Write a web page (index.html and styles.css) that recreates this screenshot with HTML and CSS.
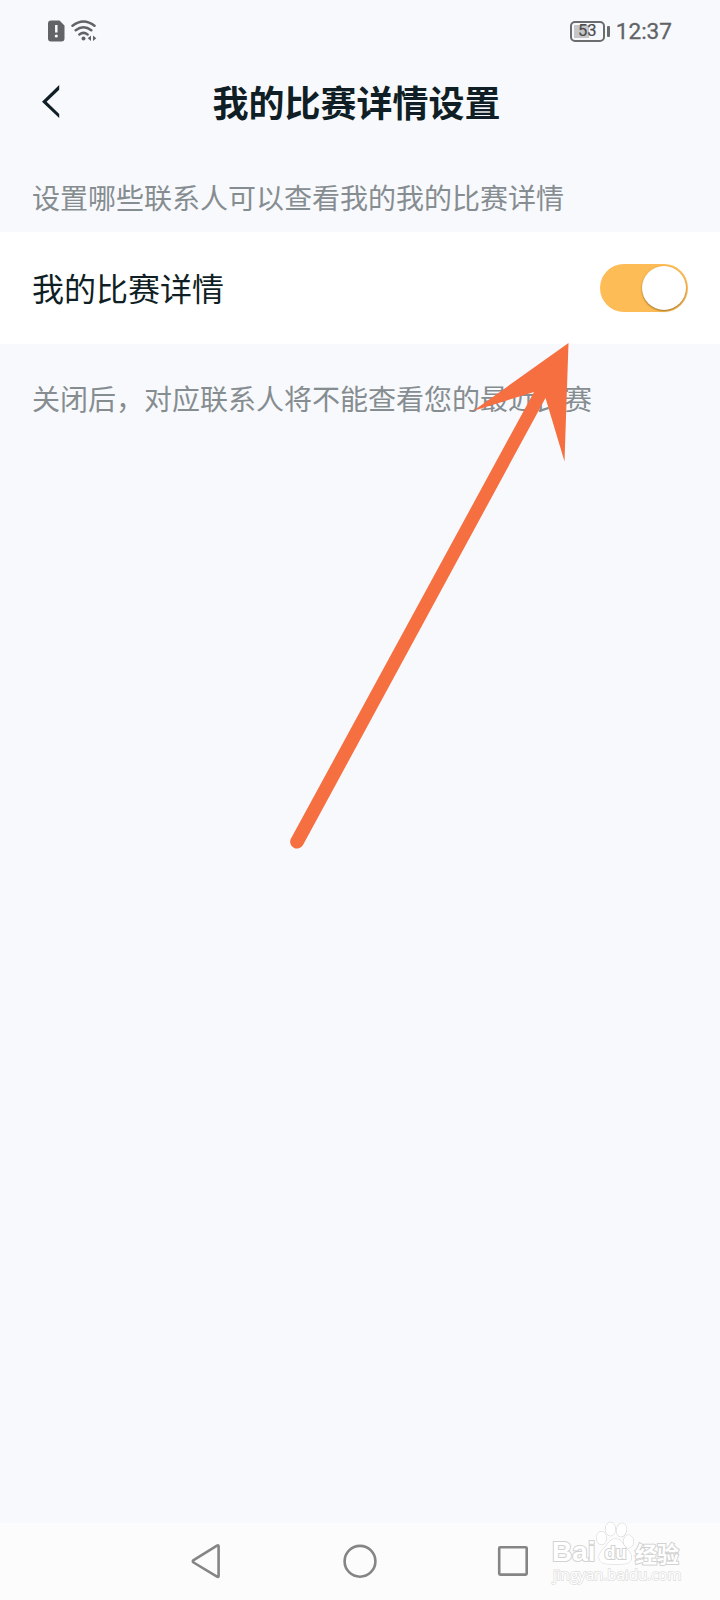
FILE: index.html
```html
<!DOCTYPE html>
<html lang="zh-CN">
<head>
<meta charset="utf-8">
<title>我的比赛详情设置</title>
<link rel="stylesheet" href="styles.css">
</head>
<body>
<div class="screen">
  <div class="status">
    <div class="status-left">
      <svg class="sim" width="17" height="22" viewBox="0 0 17 22"><path d="M3 .5h8.5L16.500 5.500V18.500a3 3 0 0 1-3 3H3a3 3 0 0 1-3-3v-15a3 3 0 0 1 3-3z" fill="#626366"/><path d="M8.300 5v7.500" stroke="#f8f9fd" stroke-width="2.500"/><circle cx="8.300" cy="16" r="1.600" fill="#f8f9fd"/></svg>
      <svg class="wifi" width="26" height="22" viewBox="0 0 26 22" fill="none" stroke="#626366" stroke-width="2.500" stroke-linecap="round"><path d="M1.500 5.800Q12.500-2.900 23.500 5.800M4.700 10.300Q12.500 4.200 20.300 10.300M8.400 14.400Q12.500 11.400 16.600 14.400"/><circle cx="12.500" cy="18.500" r="2" fill="#626366" stroke="none"/><path d="M20 15.500v5.500l-3.300-2.700zM22 15.500v5.500l3.300-2.700z" fill="#626366" stroke="none"/></svg>
    </div>
    <div class="status-right">
      <div class="battery"><span>53</span></div>
      <i class="battery-tip"></i>
      <span class="clock">12:37</span>
    </div>
  </div>
  <header class="header">
    <svg class="back" width="20" height="34" viewBox="0 0 20 34"><path d="M17.200 1V5.700L4.600 17.800 17.200 29.900V34L0 17.800z" fill="#0f1f25"/></svg>
    <h1 class="title">我的比赛详情设置</h1>
  </header>
  <p class="hint">设置哪些联系人可以查看我的我的比赛详情</p>
  <div class="item">
    <span class="item-label">我的比赛详情</span>
    <div class="toggle"><div class="knob"></div></div>
  </div>
  <p class="note">关闭后，对应联系人将不能查看您的最近比赛</p>
  <nav class="nav">
    <svg width="360" height="36" viewBox="0 0 360 36" fill="none" stroke="#858585" stroke-width="2.600" stroke-linejoin="round"><path d="M38.600 3.300V32.700Q38.600 34.500 37 33.600L13.600 19.500Q12 18.300 13.600 17.100L37 2.600Q38.600 1.700 38.600 3.300z"/><circle cx="180" cy="18.300" r="15.400"/><rect x="319.200" y="4.300" width="27.500" height="27.300" rx="1"/></svg>
  </nav>
  <svg class="arrow" width="320" height="530" viewBox="270 330 320 530"><path d="M568.500 343L473 411 534 392 291 838.500A6.700 6.700 0 0 0 303 845L545.500 398 564.500 461.500z" fill="#f66f41"/></svg>
  <div class="watermark">
    <div class="brand">
      <span class="bai">Bai</span>
      <svg class="paw" width="40" height="44" viewBox="0 0 40 44" fill="#fff" stroke="#d2d2d2"><ellipse cx="5.500" cy="17" rx="5" ry="6.500"/><ellipse cx="14.500" cy="8" rx="5" ry="6.800"/><ellipse cx="25.500" cy="9" rx="5" ry="6.800" transform="rotate(10 25.500 9)"/><ellipse cx="32.500" cy="20.500" rx="5" ry="6.500"/><path d="M19.500 18C13 18 12 24 7 28.500 0 35 3 42.500 11 42.800c5 .3 13 .3 17 0C36 42.500 38 35.500 32 29.500 27 24.500 26.500 18 19.500 18z"/><text x="19.500" y="38" text-anchor="middle" class="du">du</text></svg>
      <span class="jy">经验</span>
    </div>
    <div class="url">jingyan.baidu.com</div>
  </div>
</div>
</body>
</html>
```
FILE: styles.css
```css
* { box-sizing: border-box; margin: 0; padding: 0; }
body { font-family: "Noto Sans CJK SC", sans-serif; }
.screen { position: relative; width: 720px; height: 1600px; display: flex; flex-direction: column; background: #f8f9fd; overflow: hidden; }
svg { display: block; flex: none; }
.status { height: 60px; padding: 2px 48px 0; display: flex; align-items: center; justify-content: space-between; color: #626366; }
.status-left { display: flex; gap: 6px; }
.status-right { display: flex; align-items: center; font-family: Roboto, sans-serif; }
.battery { width: 35px; height: 21px; padding: 0; border: 2px solid #6b6c6e; border-radius: 5px; display: flex; align-items: center; justify-content: center; background: linear-gradient(90deg, #c6c6c8 15px, transparent 15px) 2px 2px / 27px 13px no-repeat; font-size: 16.5px; line-height: 16px; color: #4b4c4e; -webkit-text-stroke: .2px #4b4c4e; }
.battery-tip { width: 3px; height: 11px; margin: 0 6px 0 2px; border-radius: 1px; background: #6b6c6e; }
.clock { font-size: 22.6px; line-height: 28px; padding-top: 1px; -webkit-text-stroke: 0.3px #626366; }
.header { height: 82px; padding: 0 42px; display: grid; grid-template-columns: 20px 1fr 27px; align-items: center; }
.title { font-size: 36px; line-height: 48px; font-weight: 700; text-align: center; color: #0f1f25; white-space: nowrap; }
.hint, .note { padding: 37px 32px 17px; font-size: 28px; line-height: 36px; color: #868d90; white-space: nowrap; }
.note { padding-top: 36px; flex: 1; }
.item { height: 112px; padding: 0 32px; display: flex; align-items: center; justify-content: space-between; background: #fff; }
.item-label { font-size: 32px; line-height: 44px; padding-bottom: 3px; color: #0f1f25; }
.toggle { width: 88px; height: 48px; padding: 2px; border-radius: 24px; display: flex; justify-content: flex-end; background: #fdbc55; }
.knob { width: 44px; height: 44px; border-radius: 50%; background: #fff; box-shadow: 0 1px 2px rgba(90, 60, 0, .6); }
.nav { height: 77px; padding-bottom: 2px; display: flex; align-items: center; justify-content: center; background: #fcfcfc; }
.arrow { position: absolute; left: 270px; top: 330px; }
.watermark { position: absolute; left: 552px; top: 1521px; width: 130px; color: #fff; -webkit-text-stroke: 2px #d2d2d2; paint-order: stroke fill; }
.brand { height: 44px; display: flex; align-items: flex-end; }
.bai { width: 44px; font: 700 28px/28px "Liberation Sans", sans-serif; margin-bottom: -1px; }
.du { font: 700 18px "Liberation Sans", sans-serif; stroke: #d2d2d2; stroke-width: 2px; }
.paw { overflow: visible; }
.jy { margin-left: -1px; font-size: 22px; line-height: 24px; font-weight: 700; white-space: nowrap; margin-bottom: 1px; }
.url { font: 15.100px/20px "Open Sans", sans-serif; margin-top: -1px; padding-left: 1px; white-space: nowrap; -webkit-text-stroke: 1.500px #dfdfdf; }
```
